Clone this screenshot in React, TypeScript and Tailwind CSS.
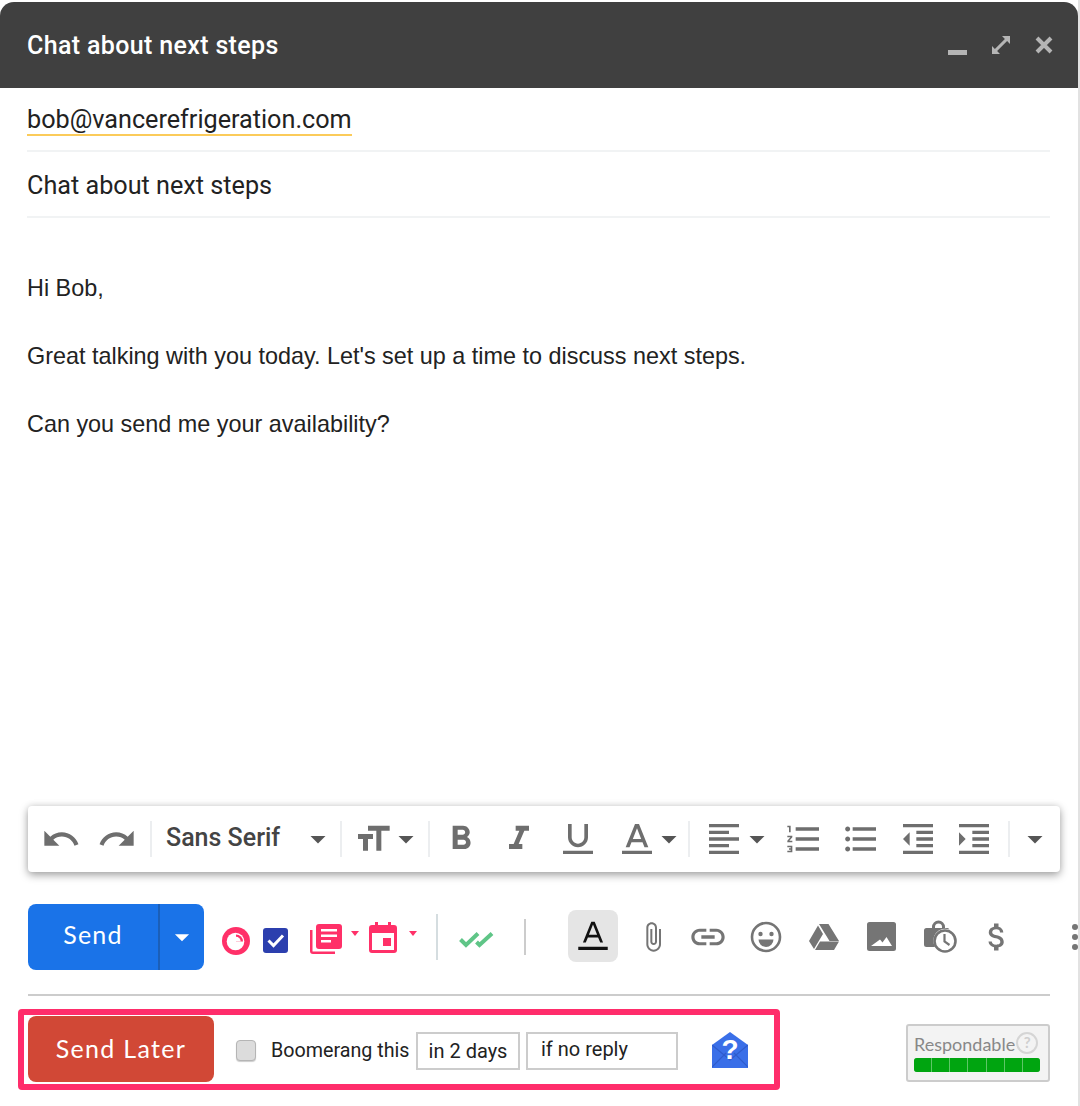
import React from "react";

const P = {
  undo: "M12.5 8c-2.65 0-5.05.99-6.9 2.6L2 7v9h9l-3.62-3.62c1.39-1.16 3.16-1.88 5.12-1.88 3.54 0 6.55 2.31 7.6 5.5l2.37-.78C21.08 11.03 17.15 8 12.5 8z",
  redo: "M18.4 10.6C16.55 8.99 14.15 8 11.5 8c-4.65 0-8.58 3.03-9.96 7.22L3.9 16c1.05-3.19 4.05-5.5 7.6-5.5 1.95 0 3.73.72 5.12 1.88L13 16h9V7l-3.6 3.6z",
  size: "M9 4v3h5v12h3V7h5V4H9zm-6 8h3v7h3v-7h3V9H3v3z",
  bold: "M15.6 10.79c.97-.67 1.65-1.77 1.65-2.79 0-2.26-1.75-4-4-4H7v14h7.04c2.09 0 3.71-1.7 3.71-3.79 0-1.52-.86-2.82-2.15-3.42zM10 6.5h3c.83 0 1.5.67 1.5 1.5s-.67 1.5-1.5 1.5h-3v-3zm3.5 9H10v-3h3.5c.83 0 1.5.67 1.5 1.5s-.67 1.5-1.5 1.5z",
  italic: "M10 4v3h2.21l-3.42 8H6v3h8v-3h-2.21l3.42-8H18V4z",
  under: "M12 17c3.31 0 6-2.69 6-6V3h-2.2v8c0 2.1-1.7 3.8-3.800 3.800S8.200 13.100 8.200 11V3H6v8c0 3.310 2.690 6 6 6zM3 19v2h18v-2H3z",
  color: "M10.800 3 5.200 17h2.300l1.200-3.100h6.600l1.200 3.100h2.300L13.200 3h-2.400zM9.500 12 12 5.600 14.500 12H9.500zM3 19v2h18v-2H3z",
  align: "M15 15H3v2h12v-2zm0-8H3v2h12V7zM3 13h18v-2H3v2zm0 8h18v-2H3v2zM3 3v2h18V3H3z",
  num: "M2 17h2v.5H3v1h1v.5H2v1h3v-4H2v1zm1-9h1V4H2v1h1v3zm-1 3h1.8L2 13.1v.9h3v-1H3.2L5 10.9V10H2v1zm5-6v2h14V5H7zm0 14h14v-2H7v2zm0-6h14v-2H7v2z",
  bullet: "M4 10.5c-.83 0-1.5.67-1.5 1.5s.67 1.5 1.5 1.5 1.5-.67 1.5-1.5-.67-1.5-1.5-1.5zm0-6c-.83 0-1.5.67-1.5 1.5S3.17 7.5 4 7.5 5.5 6.83 5.5 6 4.83 4.5 4 4.5zm0 12c-.83 0-1.5.68-1.5 1.5s.68 1.5 1.5 1.5 1.5-.68 1.5-1.5-.67-1.5-1.5-1.5zM7 19h14v-2H7v2zm0-6h14v-2H7v2zm0-8v2h14V5H7z",
  outdent: "M11 17h10v-2H11v2zm-8-5l4 4V8l-4 4zm0 9h18v-2H3v2zM3 3v2h18V3H3zm8 6h10V7H11v2zm0 4h10v-2H11v2z",
  indent: "M3 21h18v-2H3v2zM3 8v8l4-4-4-4zm8 9h10v-2H11v2zM3 3v2h18V3H3zm8 6h10V7H11v2zm0 4h10v-2H11v2z",
  arrow: "M7 10l5 5 5-5z",
  attach: "M16.5 6v11.5c0 2.21-1.79 4-4 4s-4-1.79-4-4V5c0-1.38 1.12-2.5 2.5-2.5s2.5 1.12 2.5 2.5v10.5c0 .55-.45 1-1 1s-1-.45-1-1V6H10v9.5c0 1.38 1.12 2.5 2.5 2.5s2.5-1.12 2.5-2.5V5c0-2.21-1.79-4-4-4S7 2.79 7 5v12.5c0 3.04 2.46 5.5 5.5 5.5s5.5-2.46 5.5-5.5V6h-1.5z",
  link: "M3.9 12c0-1.71 1.39-3.1 3.1-3.1h4V7H7c-2.76 0-5 2.24-5 5s2.24 5 5 5h4v-1.9H7c-1.71 0-3.1-1.39-3.1-3.1zM8 13h8v-2H8v2zm9-6h-4v1.9h4c1.71 0 3.1 1.39 3.1 3.1s-1.39 3.1-3.1 3.1h-4V17h4c2.76 0 5-2.24 5-5s-2.24-5-5-5z",
  dollar: "M11.8 10.9c-2.27-.59-3-1.2-3-2.15 0-1.09 1.01-1.85 2.7-1.85 1.78 0 2.44.85 2.5 2.1h2.21c-.07-1.72-1.12-3.3-3.21-3.81V3h-3v2.16c-1.94.42-3.5 1.68-3.5 3.61 0 2.31 1.91 3.46 4.7 4.13 2.5.6 3 1.48 3 2.41 0 .69-.49 1.79-2.7 1.79-2.06 0-2.87-.92-2.98-2.1h-2.2c.12 2.19 1.76 3.42 3.68 3.83V21h3v-2.15c1.95-.37 3.5-1.5 3.5-3.55 0-2.84-2.43-3.81-4.7-4.4z",
};

function I({ d, c = "" }: { d: string; c?: string }) {
  return (
    <svg viewBox="0 0 24 24" className={`shrink-0 fill-current ${c}`}>
      <path d={d} />
    </svg>
  );
}

const Sep = ({ c }: { c: string }) => <div className={`h-[36px] w-[2px] shrink-0 bg-[#eceef0] ${c}`} />;

function FormatBar() {
  const ic = "h-[40px] w-[40px] text-[#6e6e6e]";
  const ar = "h-[36px] w-[36px] text-[#555555]";
  return (
    <div className="ml-[28px] flex h-[66px] w-[1032px] items-center rounded-[4px] bg-white pl-[13px] shadow-[0_3px_9px_rgba(0,0,0,0.38),0_-2px_6px_rgba(0,0,0,0.05)]">
      <I d={P.undo} c={`${ic}`} />
      <I d={P.redo} c={`${ic} ml-[16px]`} />
      <Sep c="ml-[13px]" />
      <div className="ml-[14px] -mt-[3px] w-[134px] font-['Roboto',sans-serif] text-[25px] font-medium text-[#444444]">Sans Serif</div>
      <I d={P.arrow} c={ar} />
      <Sep c="ml-[4px]" />
      <I d={P.size} c={`${ic} ml-[11px]`} />
      <I d={P.arrow} c={`${ar} -ml-[5px]`} />
      <Sep c="ml-[4px]" />
      <I d={P.bold} c={`${ic} ml-[11px]`} />
      <I d={P.italic} c={`${ic} ml-[18px]`} />
      <I d={P.under} c={`${ic} ml-[19px]`} />
      <I d={P.color} c={`${ic} ml-[19px]`} />
      <I d={P.arrow} c={`${ar} -ml-[6px]`} />
      <Sep c="ml-[1px]" />
      <I d={P.align} c={`${ic} ml-[14px]`} />
      <I d={P.arrow} c={`${ar} -ml-[5px]`} />
      <I d={P.num} c={`${ic} ml-[9px]`} />
      <I d={P.bullet} c={`${ic} ml-[17px]`} />
      <I d={P.outdent} c={`${ic} ml-[17px]`} />
      <I d={P.indent} c={`${ic} ml-[16px]`} />
      <Sep c="ml-[14px]" />
      <I d={P.arrow} c={`${ar} ml-[7px]`} />
    </div>
  );
}

function SendRow() {
  const gray = "text-[#757575]";
  return (
    <div className="mt-[32px] flex h-[66px] items-center overflow-hidden pl-[28px]">
      <div className="flex h-[66px] w-[176px] shrink-0 rounded-[8px] bg-[#1a73e8] text-white">
        <div className="flex w-[130px] items-center justify-center pb-[4px] font-['Lato',sans-serif] text-[25px] tracking-[1.2px]">Send</div>
        <div className="h-full w-[2px] bg-[#1b5fb8]" />
        <div className="flex flex-1 items-center justify-center">
          <I d={P.arrow} c="h-[34px] w-[34px] text-white" />
        </div>
      </div>
      {/* streak circle */}
      <svg viewBox="0 0 28 28" className="ml-[18px] mt-[8px] h-[28px] w-[28px] shrink-0">
        <circle cx="14" cy="14" r="14" fill="#ff3068" />
        <circle cx="13.500" cy="14.500" r="8.800" fill="#fff" />
        <path d="M14 14.500V7.500a7 7 0 0 1 7 7z" fill="#ff3068" />
        <path d="M14 9.800a4.700 4.700 0 0 1 4.700 4.700H14z" fill="#fff" />
      </svg>
      {/* task checkbox */}
      <div className="ml-[13px] mt-[7px] flex h-[25px] w-[25px] shrink-0 items-center justify-center rounded-[3px] bg-[#2c3fae]">
        <svg viewBox="0 0 25 25" className="h-[25px] w-[25px]">
          <path d="M5.500 12.500l5 5L20 7.500" fill="none" stroke="#fff" strokeWidth="3" />
        </svg>
      </div>
      {/* templates */}
      <svg viewBox="0 0 32 30" className="ml-[22px] mt-[4px] h-[30px] w-[32px] shrink-0">
        <path d="M0 6h2.500v21.500H25V30H3a3 3 0 0 1-3-3z" fill="#ff3068" />
        <rect x="6" y="0" width="26" height="25" rx="3" fill="#ff3068" />
        <path d="M11 5h16v2.400H11zM11 10.500h16v2.400H11zM11 16h10v2.400H11z" fill="#fff" />
      </svg>
      <svg viewBox="0 0 8 5" className="ml-[9px] -mt-[8px] h-[5px] w-[8px] shrink-0"><path d="M0 0h8L4 5z" fill="#ff3068" /></svg>
      {/* calendar */}
      <svg viewBox="0 0 28 31" className="ml-[10px] mt-[1px] h-[31px] w-[28px] shrink-0">
        <path d="M6 0h3v3h10V0h3v3h3a3 3 0 0 1 3 3v22a3 3 0 0 1-3 3H3a3 3 0 0 1-3-3V6a3 3 0 0 1 3-3h3zM3 11v17h22V11z" fill="#ff3068" />
        <rect x="14" y="16" width="8" height="8" fill="#ff3068" />
      </svg>
      <svg viewBox="0 0 8 5" className="ml-[12px] -mt-[8px] h-[5px] w-[8px] shrink-0"><path d="M0 0h8L4 5z" fill="#ff3068" /></svg>
      <div className="ml-[19px] h-[46px] w-[2px] shrink-0 bg-[#d5dde0]" />
      {/* double check */}
      <svg viewBox="0 0 35 17" className="ml-[21px] mt-[4px] h-[17px] w-[35px] shrink-0">
        <path d="M1.500 8.500l5.500 5.500L19 2.500" fill="none" stroke="#5fc587" strokeWidth="4" />
        <path d="M17.500 11l3 3L33 2.500" fill="none" stroke="#5fc587" strokeWidth="4" />
      </svg>
      <div className="ml-[30px] h-[36px] w-[2px] shrink-0 bg-[#cccccc]" />
      {/* text format active */}
      <div className="ml-[42px] -mt-[2px] flex h-[52px] w-[50px] shrink-0 items-center justify-center rounded-[8px] bg-[#e5e5e5]">
        <svg viewBox="0 0 24 24" className="h-[34px] w-[34px] fill-[#111111]">
          <path d="M10.800 2 4.900 16.500h2L8.400 13h7.200l1.500 3.500h2L13.200 2h-2.400zM9.100 11.200 12 3.900l2.900 7.300H9.100zM1.600 19.500v2.300h20.800v-2.300H1.600z" />
        </svg>
      </div>
      <I d={P.attach} c={`h-[32px] w-[32px] ml-[19px] ${gray}`} />
      <I d={P.link} c={`h-[40px] w-[40px] ml-[19px] ${gray}`} />
      {/* emoji */}
      <svg viewBox="0 0 32 32" className={`ml-[22px] h-[32px] w-[32px] shrink-0 ${gray}`}>
        <circle cx="16" cy="16" r="14" fill="none" stroke="currentColor" strokeWidth="2.600" />
        <circle cx="10.500" cy="13" r="2.200" fill="currentColor" />
        <circle cx="21.500" cy="13" r="2.200" fill="currentColor" />
        <path d="M8.500 18.500h15a7.500 7.500 0 0 1-15 0z" fill="currentColor" />
      </svg>
      {/* drive */}
      <svg viewBox="0 0 30 26" className={`ml-[27px] h-[26px] w-[30px] shrink-0 ${gray}`}>
        <path d="M10 0h9.500L30 17h-9.500zM9 1.500 14 10 5 25 0 17zM11 17.500h19L25 26H6z" fill="currentColor" />
      </svg>
      {/* image */}
      <svg viewBox="0 0 29 29" className={`ml-[28px] -mt-[2px] h-[29px] w-[29px] shrink-0 ${gray}`}>
        <path fillRule="evenodd" d="M2.500 0h24A2.500 2.500 0 0 1 29 2.500v24a2.500 2.500 0 0 1-2.500 2.500h-24A2.500 2.500 0 0 1 0 26.500v-24A2.500 2.500 0 0 1 2.500 0zM4 24h21l-5.500-9-4 5.500-2.500-3z" fill="currentColor" />
      </svg>
      {/* lock clock */}
      <svg viewBox="0 0 33 33" className={`ml-[28px] -mt-[2px] h-[33px] w-[33px] shrink-0 ${gray}`}>
        <path fillRule="evenodd" d="M8 8V7a6.500 6.500 0 0 1 13 0v1h2.500a2.500 2.500 0 0 1 2 1.500A12 12 0 0 0 11 27H2.500A2.500 2.500 0 0 1 0 24.500v-14A2.500 2.500 0 0 1 2.500 8zm3 0h7V7a3.500 3.500 0 0 0-7 0z" fill="currentColor" />
        <circle cx="21" cy="21" r="10.500" fill="none" stroke="currentColor" strokeWidth="2.600" />
        <path d="M20.500 14v7.500l5 3.500" fill="none" stroke="currentColor" strokeWidth="2.200" />
      </svg>
      <I d={P.dollar} c={`h-[36px] w-[36px] ml-[22px] ${gray}`} />
      <div className="ml-[57px] flex shrink-0 flex-col gap-[4px]">
        <div className="h-[6px] w-[6px] rounded-full bg-[#757575]" />
        <div className="h-[6px] w-[6px] rounded-full bg-[#757575]" />
        <div className="h-[6px] w-[6px] rounded-full bg-[#757575]" />
      </div>
    </div>
  );
}

function Boomerang() {
  return (
    <div className="ml-[18px] flex h-[81px] w-[762px] shrink-0 items-center rounded-[4px] border-[6px] border-[#ff2d6b] pl-[4px] font-['Roboto',sans-serif] text-[#222222]">
      <div className="mb-[1px] flex h-[66px] w-[186px] shrink-0 items-center justify-center rounded-[8px] bg-[#d14836] font-['Lato',sans-serif] text-[25px] tracking-[1.3px] text-white">Send Later</div>
      <div className="ml-[22px] mt-[1px] h-[21px] w-[20px] shrink-0 rounded-[4px] border border-[#b5b5b5] bg-[#dcdcdc] shadow-[0_1px_1px_rgba(0,0,0,0.2)]" />
      <div className="ml-[15px] mt-[3px] w-[145px] text-[19.700px]">Boomerang this</div>
      <div className="mt-[2px] flex h-[38px] w-[104px] shrink-0 items-center justify-center border-2 border-[#cccccc] pt-[1px] text-[20px]">in 2 days</div>
      <div className="ml-[6px] mt-[2px] h-[38px] w-[152px] shrink-0 border-2 border-[#cccccc] pl-[13px] text-[20px] leading-[30px]">if no reply</div>
      <svg viewBox="0 0 36 36" className="ml-[34px] h-[36px] w-[36px] shrink-0">
        <path d="M18 0l18 13v23H0V13z" fill="#3a6fe8" />
        <path d="M0 35l14-14M36 35 22 21M0 13l18 15 18-15" fill="none" stroke="#2f5ccc" strokeWidth="1.200" />
        <text x="18" y="27" textAnchor="middle" fontFamily="'Liberation Sans',sans-serif" fontWeight="700" fontSize="28" fill="#ffffff">?</text>
      </svg>
    </div>
  );
}

function Respondable() {
  return (
    <div className="ml-[126px] mt-[6px] flex h-[58px] w-[144px] shrink-0 flex-col rounded-[3px] border-[2px] border-[#cccccc] bg-[#f3f3f3] pl-[6px] pt-[6px]">
      <div className="flex h-[26px] items-center font-['Lato',sans-serif] text-[18px] text-[#888888]">
        <span>Respondable</span>
        <span className="-mt-[4px] ml-[1px] flex h-[22px] w-[22px] items-center justify-center rounded-full border-2 border-[#d5d5d5] text-[15px] font-bold leading-none text-[#cfcfcf]">?</span>
      </div>
      <div className="flex h-[14px] w-[126px] gap-[1px] overflow-hidden rounded-[3px] bg-[#5ec668]">
        {[0, 1, 2, 3, 4, 5, 6].map((i) => (
          <div key={i} className="flex-1 bg-[#00a510]" />
        ))}
      </div>
    </div>
  );
}

export default function App() {
  return (
    <div className="h-[1106px] w-[1080px] overflow-hidden border-r-2 border-[#e2e2e2] bg-white pt-[2px]">
      <div className="flex h-[86px] items-center justify-between rounded-t-[14px] bg-[#404040] pl-[27px] pr-[25px]">
        <div className="pt-[2px] font-['Roboto',sans-serif] text-[25px] font-medium tracking-[0.35px] text-white">Chat about next steps</div>
        <div className="flex items-center text-[#b5b5b5]">
          <div className="mt-[14px] h-[5px] w-[19px] bg-[#b5b5b5]" />
          <svg viewBox="0 0 18 18" className="ml-[25px] h-[18px] w-[18px]">
            <path d="M10 0h8v8l-2.900-2.900-10 10L8 18H0v-8l2.900 2.900 10-10z" fill="currentColor" />
          </svg>
          <svg viewBox="0 0 18 18" className="ml-[25px] h-[18px] w-[18px]">
            <path d="M2 2l14 14M16 2 2 16" stroke="currentColor" strokeWidth="4" fill="none" />
          </svg>
        </div>
      </div>

      <div className="mx-[27px] w-[1023px] font-['Roboto',sans-serif] text-[#222222]">
        <div className="flex h-[64px] items-start border-b-2 border-[#f1f3f4] pt-[17px]">
          <span className="border-b-2 border-[#fbcb5a] text-[25.200px] leading-[29px]">bob@vancerefrigeration.com</span>
        </div>
        <div className="flex h-[66px] items-center border-b-2 border-[#f1f3f4] pt-[4px] text-[25.200px]">Chat about next steps</div>
      </div>

      <div className="ml-[27px] mt-[53px] h-[535px] font-['Liberation_Sans',sans-serif] text-[23.400px] leading-[34px] text-[#222222]">
        <div>Hi Bob,</div>
        <div className="mt-[34px]">Great talking with you today. Let's set up a time to discuss next steps.</div>
        <div className="mt-[34px]">Can you send me your availability?</div>
      </div>

      <FormatBar />
      <SendRow />
      <div className="ml-[28px] mt-[24px] h-[2px] w-[1022px] bg-[#cccccc]" />
      <div className="mt-[13px] flex items-center">
        <Boomerang />
        <Respondable />
      </div>
    </div>
  );
}
